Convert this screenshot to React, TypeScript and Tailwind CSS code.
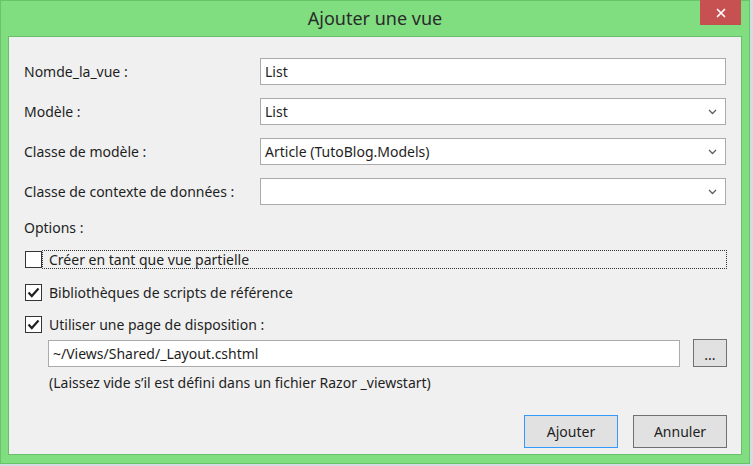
import { X } from 'lucide-react'

const labels = ['Nomde_la_vue :', 'Modèle :', 'Classe de modèle :', 'Classe de contexte de données :']
const values = ['List', 'List', 'Article (TutoBlog.Models)', '']

function Chevron() {
  return (
    <svg width="9" height="6" viewBox="0 0 9 6" className="shrink-0">
      <path d="M1 1 L4.5 4.5 L8 1" fill="none" stroke="#606060" strokeWidth="1.3" />
    </svg>
  )
}

function CheckBox({ checked }: { checked: boolean }) {
  return (
    <div className="w-[17px] h-[17px] border border-[#333] bg-white flex items-center justify-center shrink-0">
      {checked && (
        <svg width="13" height="11" viewBox="0 0 13 11">
          <path d="M1.5 5.5 L4.8 9 L11.5 1.5" fill="none" stroke="#222" strokeWidth="2.2" />
        </svg>
      )}
    </div>
  )
}

export default function App() {
  return (
    <div className="w-[753px] h-[466px] bg-[#d5dae2] overflow-hidden" style={{ fontFamily: '"Segoe UI", "Noto Sans", sans-serif' }}>
      <div className="w-[750px] h-[464px] bg-[#80dd80] border border-[#6ac36a] flex flex-col">
        <div className="h-[35px] flex items-start shrink-0">
          <div className="w-[60px]" />
          <div className="flex-1 text-center text-[18px] text-[#2b2b2b] pt-[4px]">Ajouter une vue</div>
          <div className="w-[60px] flex justify-start pl-[11px]">
            <div className="w-[41px] h-[25px] -mt-[1px] bg-[#c75050] flex items-center justify-center">
              <X size={14} color="#fff" strokeWidth={3} />
            </div>
          </div>
        </div>
        <div className="ml-[7px] w-[734px] h-[419px] bg-[#f0f0f0] border border-[#69be69] flex flex-col pl-[15px] pr-[14px] pt-[21px] pb-[6px] text-[14px] text-[#1e1e1e]">
          <div className="flex flex-col gap-[13px]">
            {labels.map((l, i) => (
              <div key={l} className="flex items-center h-[27px]">
                <div className="w-[236px]">{l}</div>
                <div className="w-[466px] h-[27px] bg-white border border-[#ababab] flex items-center pl-[4px] pr-[8px]">
                  <span className="flex-1">{values[i]}</span>
                  {i > 0 && <Chevron />}
                </div>
              </div>
            ))}
          </div>
          <div className="mt-[13px] h-[20px] leading-[20px]">Options :</div>
          <div className="mt-[12px] flex items-center h-[19px] pl-[1px]">
            <CheckBox checked={false} />
            <div className="flex-1 h-[19px] border border-dotted border-[#333] pl-[6px] leading-[17px]">Créer en tant que vue partielle</div>
          </div>
          <div className="mt-[14px] flex items-center h-[19px] pl-[1px]">
            <CheckBox checked />
            <div className="pl-[7px]">Bibliothèques de scripts de référence</div>
          </div>
          <div className="mt-[13px] flex items-center h-[19px] pl-[1px]">
            <CheckBox checked />
            <div className="pl-[7px]">Utiliser une page de disposition :</div>
          </div>
          <div className="mt-[5px] ml-[24px] flex items-center gap-[13px]">
            <div className="w-[632px] h-[27px] bg-white border border-[#ababab] flex items-center pl-[4px]">~/Views/Shared/_Layout.cshtml</div>
            <div className="w-[34px] h-[28px] bg-[#e1e1e1] border border-[#707070] flex items-center justify-center leading-none pt-[4px]">...</div>
          </div>
          <div className="mt-[6px] ml-[25px] h-[20px] leading-[20px]">(Laissez vide s’il est défini dans un fichier Razor _viewstart)</div>
          <div className="mt-auto flex justify-end gap-[15px]">
            <div className="w-[94px] h-[33px] bg-[#e1e1e1] border border-[#3399ff] flex items-center justify-center">Ajouter</div>
            <div className="w-[94px] h-[33px] bg-[#e1e1e1] border border-[#707070] flex items-center justify-center">Annuler</div>
          </div>
        </div>
      </div>
    </div>
  )
}
